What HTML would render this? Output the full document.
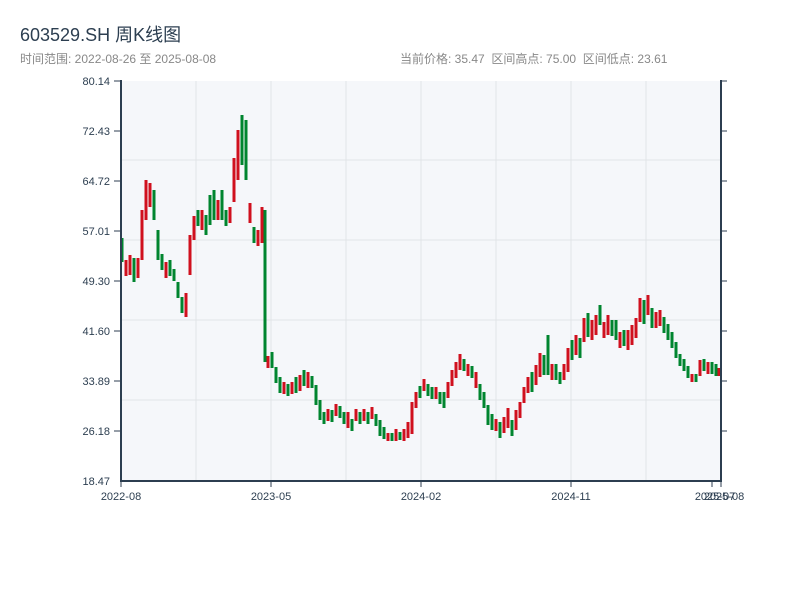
<!DOCTYPE html>
<html><head><meta charset="utf-8"><style>
body{margin:0;width:800px;height:600px;background:#fff;font-family:"Liberation Sans","Noto Sans CJK SC",sans-serif;overflow:hidden}
</style></head><body>
<svg width="800" height="600" xmlns="http://www.w3.org/2000/svg" font-family="Liberation Sans, Noto Sans CJK SC, sans-serif" style="display:block">
<text x="20" y="41" font-size="18" fill="#2c3e50">603529.SH 周K线图</text>
<text x="20" y="63" font-size="12" fill="#888">时间范围: 2022-08-26 至 2025-08-08</text>
<text x="400" y="63" font-size="12" fill="#888" xml:space="preserve">当前价格: 35.47  区间高点: 75.00  区间低点: 23.61</text>
<rect x="121" y="81" width="600" height="400" fill="#f5f7fa"/>
<g stroke="#e1e4e8" stroke-width="1">
<line x1="196" y1="81" x2="196" y2="481"/><line x1="271" y1="81" x2="271" y2="481"/><line x1="346" y1="81" x2="346" y2="481"/><line x1="421" y1="81" x2="421" y2="481"/><line x1="496" y1="81" x2="496" y2="481"/><line x1="571" y1="81" x2="571" y2="481"/><line x1="646" y1="81" x2="646" y2="481"/>
<line x1="121" y1="160" x2="721" y2="160"/><line x1="121" y1="240" x2="721" y2="240"/><line x1="121" y1="320" x2="721" y2="320"/><line x1="121" y1="400" x2="721" y2="400"/>
</g>
<path fill="none" stroke="#00852f" stroke-width="3" d="M122 238V262M134 258V282M154 190V220M158 230V260M162 254V270M170 260V276M174 269V281M178 282V298M182 297V313M198 210V226M206 215V235M210 195V225M214 190V220M222 190V220M226 210V226M242 115V165M246 120V180M254 227V243M265 210V362M272 352V368M276 367V383M280 377V393M288 384V396M296 377V393M304 370V386M312 376V388M316 385V405M320 400V420M324 412V424M332 410V422M340 406V418M344 412V424M352 419V431M360 412V424M368 412V424M376 414V426M380 420V436M384 427V439M392 433V441M400 432V440M420 386V398M428 384V396M432 387V399M440 392V404M444 392V408M464 359V371M472 366V378M480 384V400M484 392V408M488 405V425M492 414V430M500 422V438M512 420V436M532 372V392M544 355V375M548 335V375M556 364V380M560 372V384M572 340V360M580 338V358M588 313V337M600 305V325M612 320V336M616 320V340M624 330V346M644 300V324M652 308V328M664 317V333M668 324V340M672 332V348M676 342V358M680 354V366M684 359V371M688 366V378M696 374V382M704 359V371M712 362V374M716 364V376"/>
<path fill="none" stroke="#d0101e" stroke-width="3" d="M126 260V276M130 255V275M138 258V278M142 210V260M146 180V220M150 183V207M166 262V278M186 293V317M190 235V275M194 216V240M202 210V230M218 200V220M230 207V223M234 158V202M238 130V180M250 203V223M258 230V246M262 207V243M268 356V368M284 382V394M292 382V394M300 375V391M308 372V388M328 409V421M336 404V416M348 412V428M356 409V421M364 409V421M372 407V419M388 433V441M396 429V441M404 429V441M408 422V438M412 402V434M416 392V408M424 379V391M436 387V399M448 382V398M452 370V386M456 362V378M460 354V370M468 364V376M476 372V388M496 419V431M504 417V433M508 408V428M516 410V430M520 402V418M524 387V403M528 377V393M536 365V385M540 353V377M552 364V380M564 364V380M568 348V372M576 335V355M584 318V342M592 320V340M596 315V335M604 322V338M608 315V335M620 332V348M628 330V350M632 325V345M636 318V338M640 298V322M648 295V315M656 312V328M660 310V326M692 374V382M700 360V376M708 362V374M719 368V376"/>
<g stroke="#2c3e50" stroke-width="2" fill="none">
<line x1="121" y1="80" x2="121" y2="482"/><line x1="120" y1="481" x2="722" y2="481"/><line x1="721" y1="80" x2="721" y2="482"/>
</g>
<g stroke="#2c3e50" stroke-width="1">
<line x1="114" y1="81" x2="121" y2="81"/><line x1="114" y1="131" x2="121" y2="131"/><line x1="114" y1="181" x2="121" y2="181"/><line x1="114" y1="231" x2="121" y2="231"/><line x1="114" y1="281" x2="121" y2="281"/><line x1="114" y1="331" x2="121" y2="331"/><line x1="114" y1="381" x2="121" y2="381"/><line x1="114" y1="431" x2="121" y2="431"/>
<line x1="721" y1="81" x2="727" y2="81"/><line x1="721" y1="131" x2="727" y2="131"/><line x1="721" y1="181" x2="727" y2="181"/><line x1="721" y1="231" x2="727" y2="231"/><line x1="721" y1="281" x2="727" y2="281"/><line x1="721" y1="331" x2="727" y2="331"/><line x1="721" y1="381" x2="727" y2="381"/><line x1="721" y1="431" x2="727" y2="431"/>
<line x1="121" y1="481" x2="121" y2="487"/><line x1="271" y1="481" x2="271" y2="487"/><line x1="421" y1="481" x2="421" y2="487"/><line x1="571" y1="481" x2="571" y2="487"/><line x1="712" y1="481" x2="712" y2="487"/><line x1="721" y1="481" x2="721" y2="487"/>
</g>
<g font-size="11" fill="#2c3e50" text-anchor="end">
<text x="110" y="85">80.14</text><text x="110" y="135">72.43</text><text x="110" y="185">64.72</text><text x="110" y="235">57.01</text><text x="110" y="285">49.30</text><text x="110" y="335">41.60</text><text x="110" y="385">33.89</text><text x="110" y="435">26.18</text><text x="110" y="485">18.47</text>
</g>
<g font-size="11" fill="#2c3e50" text-anchor="middle">
<text x="121" y="500">2022-08</text><text x="271" y="500">2023-05</text><text x="421" y="500">2024-02</text><text x="571" y="500">2024-11</text><text x="715" y="500">2025-07</text><text x="724" y="500">2025-08</text>
</g>
</svg>
</body></html>
